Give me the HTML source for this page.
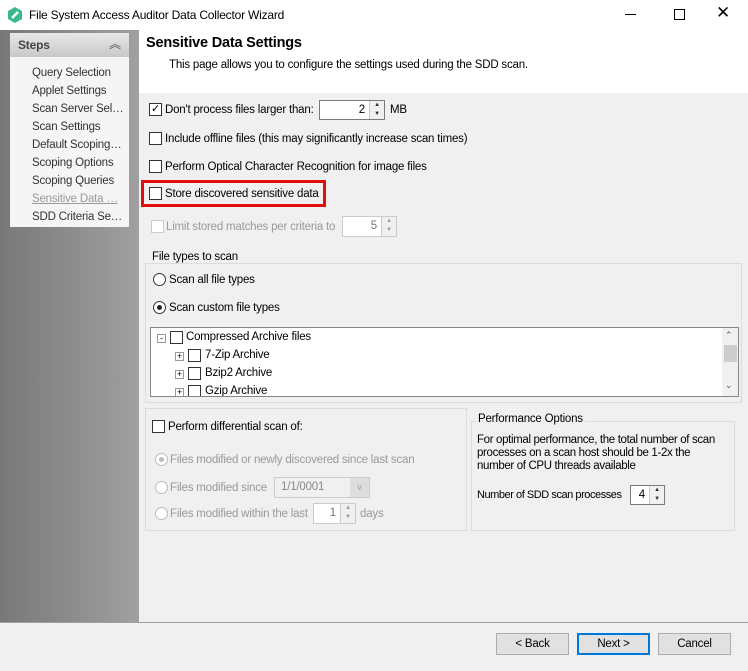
<!DOCTYPE html>
<html><head><style>
*{box-sizing:border-box;margin:0;padding:0}
body{width:748px;height:671px;background:#f0f0f0;font-family:"Liberation Sans",sans-serif;font-size:11.5px;color:#000;position:relative;overflow:hidden;letter-spacing:-0.2px}
.a{position:absolute;white-space:nowrap}
.cb{position:absolute;width:13px;height:13px;border:1px solid #333;background:#fff}
.cb.d{border-color:#ccc}
.rb{position:absolute;width:13px;height:13px;border:1px solid #333;border-radius:50%;background:#fff}
.rb.d{border-color:#bbb}
.gray{color:#999}
.box{position:absolute;border:1px solid #dcdcdc}
.btn{position:absolute;top:633px;width:73px;height:22px;border:1px solid #adadad;background:#e1e1e1;text-align:center;line-height:20px}
.spin{position:absolute;border:1px solid #7a7a7a;background:#fff;text-align:right}
.sp{position:absolute;right:0;top:0;bottom:0;width:15px;border-left:1px solid #ccc;background:#f0f0f0;font-size:6px;line-height:9px;text-align:center;color:#333}
</style></head><body>
<!-- title bar -->
<div class="a" style="left:0;top:0;width:748px;height:30px;background:#fff"></div>
<svg class="a" style="left:8px;top:7px" width="14" height="16" viewBox="0 0 14 16"><path d="M7 0L14 4V12L7 16L0 12V4Z" fill="#3bb88f"/><path d="M4 11L10 5" stroke="#fff" stroke-width="2.5"/></svg>
<div class="a" style="left:29px;top:8px;font-size:12px">File System Access Auditor Data Collector Wizard</div>
<div class="a" style="left:625px;top:14px;width:11px;height:1px;background:#000"></div>
<div class="a" style="left:674px;top:9px;width:11px;height:11px;border:1px solid #000"></div>
<div class="a" style="left:716px;top:3px;font-size:17px">✕</div>
<!-- left panel -->
<div class="a" style="left:0;top:30px;width:139px;height:593px;background:linear-gradient(90deg,#787878,#a0a0a0)"></div>
<div class="a" style="left:10px;top:33px;width:119px;height:194px;background:#f5f5f5"></div>
<div class="a" style="left:10px;top:33px;width:119px;height:24px;background:linear-gradient(#e8e8e8,#c8c8c8)"></div>
<div class="a" style="left:18px;top:38px;font-weight:bold;color:#444;font-size:12px">Steps</div>
<div class="a" style="left:109px;top:35px;color:#555;font-size:12px">︽</div>
<div class="a" style="left:32px;top:64px;line-height:18px;color:#333">Query Selection<br>Applet Settings<br>Scan Server Sel…<br>Scan Settings<br>Default Scoping…<br>Scoping Options<br>Scoping Queries<br><span style="color:#999;text-decoration:underline">Sensitive Data …</span><br>SDD Criteria Se…</div>
<!-- header -->
<div class="a" style="left:139px;top:30px;width:609px;height:63px;background:#fff"></div>
<div class="a" style="left:146px;top:35px;font-weight:bold;font-size:14.5px">Sensitive Data Settings</div>
<div class="a" style="left:169px;top:59px">This page allows you to configure the settings used during the SDD scan.</div>
<!-- options -->
<div class="cb" style="left:149px;top:103px;text-align:center;font-size:11px;line-height:11px">✓</div>
<div class="a" style="left:165px;top:104px">Don't process files larger than:</div>
<div class="spin" style="left:319px;top:100px;width:66px;height:20px;padding-right:19px;line-height:18px">2<div class="sp">▲<br>▼</div></div>
<div class="a" style="left:390px;top:104px">MB</div>
<div class="cb" style="left:149px;top:132px"></div>
<div class="a" style="left:165px;top:133px">Include offline files (this may significantly increase scan times)</div>
<div class="cb" style="left:149px;top:160px"></div>
<div class="a" style="left:165px;top:161px">Perform Optical Character Recognition for image files</div>
<div class="a" style="left:141px;top:180px;width:185px;height:27px;border:3px solid #e01010"></div>
<div class="cb" style="left:149px;top:187px"></div>
<div class="a" style="left:165px;top:188px">Store discovered sensitive data</div>
<div class="cb d" style="left:151px;top:220px"></div>
<div class="a gray" style="left:166px;top:221px">Limit stored matches per criteria to</div>
<div class="spin" style="left:342px;top:216px;width:55px;height:21px;border-color:#ccc;padding-right:19px;line-height:19px;color:#777">5<div class="sp" style="color:#999">▲<br>▼</div></div>
<!-- file types -->
<div class="box" style="left:145px;top:263px;width:597px;height:140px"></div>
<div class="a" style="left:150px;top:251px;background:#f0f0f0;padding:0 2px">File types to scan</div>
<div class="rb" style="left:153px;top:273px"></div>
<div class="a" style="left:169px;top:274px">Scan all file types</div>
<div class="rb" style="left:153px;top:301px"><div style="position:absolute;left:3px;top:3px;width:5px;height:5px;border-radius:50%;background:#222"></div></div>
<div class="a" style="left:169px;top:302px">Scan custom file types</div>
<div class="a" style="left:150px;top:327px;width:589px;height:70px;border:1px solid #828790;background:#fff;overflow:hidden">
 <div class="a" style="left:6px;top:6px;width:9px;height:9px;border:1px solid #999;font-size:9px;line-height:7px;text-align:center">-</div>
 <div class="cb" style="left:19px;top:3px"></div><div class="a" style="left:35px;top:3px">Compressed Archive files</div>
 <div class="a" style="left:24px;top:24px;width:9px;height:9px;border:1px solid #999;font-size:9px;line-height:7px;text-align:center">+</div>
 <div class="cb" style="left:37px;top:21px"></div><div class="a" style="left:54px;top:21px">7-Zip Archive</div>
 <div class="a" style="left:24px;top:42px;width:9px;height:9px;border:1px solid #999;font-size:9px;line-height:7px;text-align:center">+</div>
 <div class="cb" style="left:37px;top:39px"></div><div class="a" style="left:54px;top:39px">Bzip2 Archive</div>
 <div class="a" style="left:24px;top:60px;width:9px;height:9px;border:1px solid #999;font-size:9px;line-height:7px;text-align:center">+</div>
 <div class="cb" style="left:37px;top:57px"></div><div class="a" style="left:54px;top:57px">Gzip Archive</div>
 <div class="a" style="left:571px;top:0;width:17px;height:68px;background:#f0f0f0"></div>
 <div class="a" style="left:573px;top:17px;width:13px;height:17px;background:#cdcdcd"></div>
 <div class="a" style="left:574px;top:2px;font-size:9px;color:#555">⌃</div>
 <div class="a" style="left:574px;top:52px;font-size:9px;color:#555">⌄</div>
</div>
<!-- differential -->
<div class="box" style="left:145px;top:408px;width:322px;height:123px"></div>
<div class="cb" style="left:152px;top:420px"></div>
<div class="a" style="left:168px;top:421px">Perform differential scan of:</div>
<div class="rb d" style="left:155px;top:453px"><div style="position:absolute;left:3px;top:3px;width:5px;height:5px;border-radius:50%;background:#bbb"></div></div>
<div class="a gray" style="left:170px;top:454px">Files modified or newly discovered since last scan</div>
<div class="rb d" style="left:155px;top:481px"></div>
<div class="a gray" style="left:170px;top:482px">Files modified since</div>
<div class="a" style="left:274px;top:477px;width:96px;height:21px;border:1px solid #ccc;background:#f0f0f0;color:#888;padding:3px 0 0 6px">1/1/0001</div>
<div class="a" style="left:350px;top:478px;width:19px;height:19px;background:#ddd;color:#aaa;text-align:center;font-size:9px;line-height:19px">∨</div>
<div class="rb d" style="left:155px;top:507px"></div>
<div class="a gray" style="left:170px;top:508px">Files modified within the last</div>
<div class="spin" style="left:313px;top:503px;width:43px;height:21px;border-color:#ccc;padding-right:19px;line-height:19px;color:#777">1<div class="sp" style="color:#999">▲<br>▼</div></div>
<div class="a gray" style="left:360px;top:508px">days</div>
<!-- performance -->
<div class="box" style="left:471px;top:421px;width:264px;height:110px"></div>
<div class="a" style="left:476px;top:413px;background:#f0f0f0;padding:0 2px">Performance Options</div>
<div class="a" style="left:477px;top:434px;line-height:13px;letter-spacing:-0.35px">For optimal performance, the total number of scan<br>processes on a scan host should be 1-2x the<br>number of CPU threads available</div>
<div class="a" style="left:477px;top:489px;letter-spacing:-0.45px;font-size:11px">Number of SDD scan processes</div>
<div class="spin" style="left:630px;top:485px;width:35px;height:20px;padding-right:19px;line-height:18px">4<div class="sp">▲<br>▼</div></div>
<!-- bottom -->
<div class="a" style="left:0;top:622px;width:748px;height:1px;background:#a0a0a0"></div>
<div class="btn" style="left:496px">&lt; Back</div>
<div class="btn" style="left:577px;border:2px solid #0078d7;line-height:18px">Next &gt;</div>
<div class="btn" style="left:658px">Cancel</div>
</body></html>
